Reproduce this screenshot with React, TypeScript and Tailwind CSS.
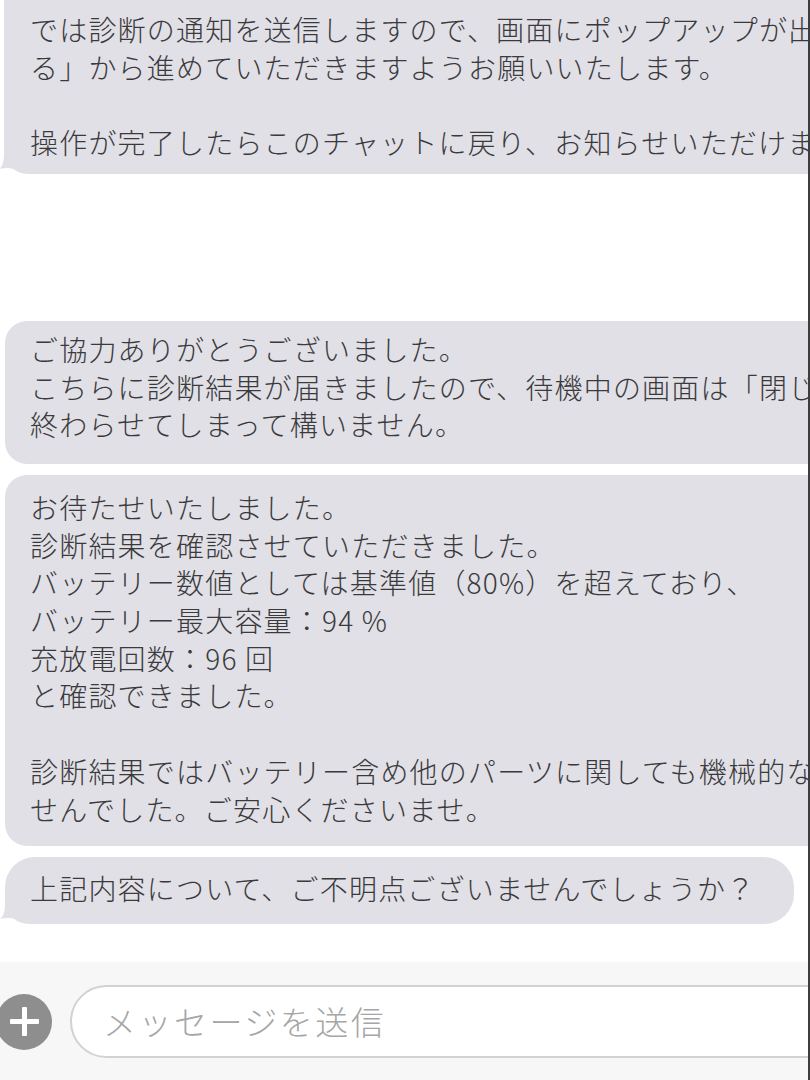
import React from "react";

const BUBBLE = "#e1e0e6";

function Tail() {
  return (
    <svg
      className="absolute left-[-5px] bottom-0"
      width="30"
      height="30"
      viewBox="0 0 30 30"
      aria-hidden="true"
    >
      <path
        d="M5 2 L5 8 C5 17 4 22 0 25 C5 23.5 10 23.5 15 25 L15 8 Z"
        fill={BUBBLE}
      />
    </svg>
  );
}

function Lines({ lines }: { lines: string[] }) {
  return (
    <>
      {lines.map((l, i) =>
        l === "" ? (
          <div key={i} className="h-[37.7px]" />
        ) : (
          <div key={i} className="whitespace-nowrap">
            {l}
          </div>
        )
      )}
    </>
  );
}

export default function App() {
  return (
    <div className="w-[810px] h-[1080px] overflow-hidden bg-white border-r-2 border-[#3d3d3d] flex flex-col font-['Noto_Sans_CJK_JP','Noto_Sans',sans-serif] font-light text-[28px] leading-[37.7px] tracking-[1.2px] text-[#3a3a3d]">
      <div className="flex-1 flex flex-col items-start">
        {/* bubble 1 */}
        <div className="relative -mt-[20px] ml-[4px] w-max bg-[#e1e0e6] rounded-[22px] rounded-bl-[24px] pl-[26px] pr-[30px] pt-[31px] pb-[12px]">
          <Lines
            lines={[
              "では診断の通知を送信しますので、画面にポップアップが出ましたら「続け",
              "る」から進めていただきますようお願いいたします。",
              "",
              "操作が完了したらこのチャットに戻り、お知らせいただけますでしょうか。",
            ]}
          />
          <Tail />
        </div>

        {/* bubble 2 */}
        <div className="mt-[147px] ml-[5px] w-max bg-[#e1e0e6] rounded-[22px] pl-[25px] pr-[30px] pt-[10px] pb-[20px]">
          <Lines
            lines={[
              "ご協力ありがとうございました。",
              "こちらに診断結果が届きましたので、待機中の画面は「閉じる」で",
              "終わらせてしまって構いません。",
            ]}
          />
        </div>

        {/* bubble 3 */}
        <div className="mt-[11px] ml-[5px] w-max bg-[#e1e0e6] rounded-[22px] pl-[25px] pr-[30px] pt-[14px] pb-[18px]">
          <Lines
            lines={[
              "お待たせいたしました。",
              "診断結果を確認させていただきました。",
              "バッテリー数値としては基準値（80%）を超えており、",
              "バッテリー最大容量：94 %",
              "充放電回数：96 回",
              "と確認できました。",
              "",
              "診断結果ではバッテリー含め他のパーツに関しても機械的な問題は見受けられま",
              "せんでした。ご安心くださいませ。",
            ]}
          />
        </div>

        {/* bubble 4 */}
        <div className="relative mt-[11px] ml-[5px] w-max bg-[#e1e0e6] rounded-[30px] rounded-bl-[24px] pl-[25px] pr-[38px] pt-[13px] pb-[16px]">
          <Lines lines={["上記内容について、ご不明点ございませんでしょうか？"]} />
          <Tail />
        </div>
      </div>

      {/* input bar */}
      <div className="h-[118px] shrink-0 bg-[#f7f7f7] pt-[23px] flex items-start">
        <div className="flex items-center w-full">
          <div className="-ml-[4px] w-[56px] h-[56px] shrink-0 rounded-full bg-[#8e8e8e] flex items-center justify-center relative">
            <div className="absolute w-[29px] h-[5px] bg-white rounded-[1px]" />
            <div className="absolute w-[5px] h-[29px] bg-white rounded-[1px]" />
          </div>
          <div className="ml-[18px] -mr-[60px] flex-1 h-[73px] rounded-full border-2 border-[#d2d2d2] bg-white flex items-center pl-[31px]">
            <span className="text-[33px] tracking-[2.5px] text-[#a6a6a6] leading-none">
              メッセージを送信
            </span>
          </div>
        </div>
      </div>
    </div>
  );
}
